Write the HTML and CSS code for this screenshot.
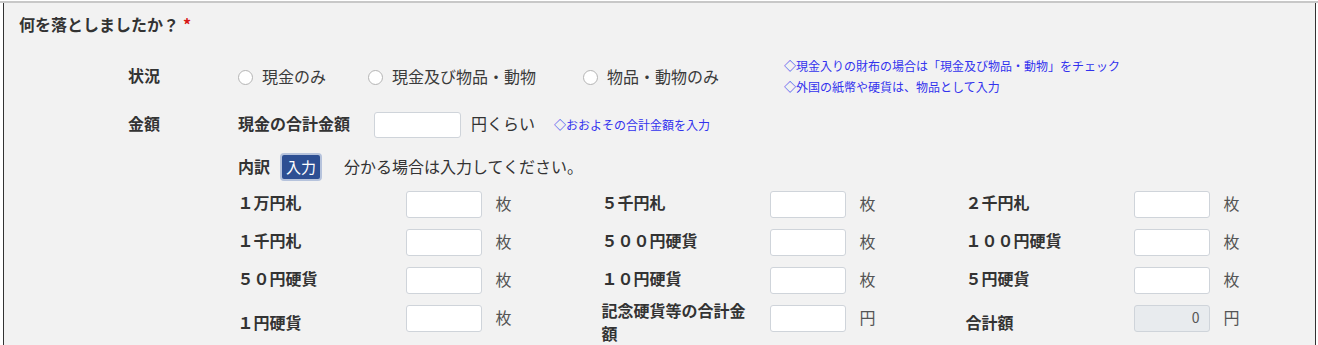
FILE: index.html
```html
<!DOCTYPE html>
<html lang="ja">
<head>
<meta charset="utf-8">
<link rel="stylesheet" href="styles.css">
</head>
<body>
<div class="topline"></div>
<div class="panel">
  <div class="title">何を落としましたか？<span class="req">*</span></div>
  <div class="fields">
    <div class="row row-status">
      <div class="row-label">状況</div>
      <div class="row-body">
        <label class="radio r1"><span class="dot"></span>現金のみ</label>
        <label class="radio r2"><span class="dot"></span>現金及び物品・動物</label>
        <label class="radio r3"><span class="dot"></span>物品・動物のみ</label>
        <div class="note note-two">◇現金入りの財布の場合は「現金及び物品・動物」をチェック<br>◇外国の紙幣や硬貨は、物品として入力</div>
      </div>
    </div>
    <div class="row row-amount">
      <div class="row-label">金額</div>
      <div class="row-body">
        <span class="sublabel">現金の合計金額</span>
        <span class="input amount-input"></span>
        <span class="unit-text">円くらい</span>
        <span class="note note-one">◇おおよその合計金額を入力</span>
      </div>
    </div>
    <div class="row row-detail">
      <div class="row-label"></div>
      <div class="row-body">
        <span class="sublabel">内訳</span>
        <span class="btn">入力</span>
        <span class="hint">分かる場合は入力してください。</span>
      </div>
    </div>
    <div class="row">
      <div class="row-label"></div>
      <div class="grid">
        <div class="g-label">１万円札</div><span class="input"></span><span class="g-unit">枚</span>
        <div class="g-label">５千円札</div><span class="input"></span><span class="g-unit">枚</span>
        <div class="g-label">２千円札</div><span class="input"></span><span class="g-unit">枚</span>

        <div class="g-label">１千円札</div><span class="input"></span><span class="g-unit">枚</span>
        <div class="g-label">５００円硬貨</div><span class="input"></span><span class="g-unit">枚</span>
        <div class="g-label">１００円硬貨</div><span class="input"></span><span class="g-unit">枚</span>

        <div class="g-label">５０円硬貨</div><span class="input"></span><span class="g-unit">枚</span>
        <div class="g-label">１０円硬貨</div><span class="input"></span><span class="g-unit">枚</span>
        <div class="g-label">５円硬貨</div><span class="input"></span><span class="g-unit">枚</span>

        <div class="g-label">１円硬貨</div><span class="input"></span><span class="g-unit">枚</span>
        <div class="g-label">記念硬貨等の合計金額</div><span class="input"></span><span class="g-unit">円</span>
        <div class="g-label">合計額</div><span class="input disabled">0</span><span class="g-unit">円</span>
      </div>
    </div>
  </div>
</div>
</body>
</html>
```
FILE: styles.css
```css
html, body {
  margin: 0;
  padding: 0;
  background: #ffffff;
}
body {
  font-family: "Noto Sans CJK JP", "Noto Sans", sans-serif;
  color: #333333;
  font-size: 16px;
  height: 345px;
  overflow: hidden;
}
.topline {
  height: 2px;
  margin-top: 1px;
  background: #c8c8c8;
}
.panel {
  margin-left: 3px;
  width: 1313px;
  height: 400px;
  border-left: 1px solid #333333;
  border-right: 1px solid #333333;
  background: #f2f2f2;
  padding: 10px 0 0 15px;
  box-sizing: border-box;
}
.title {
  font-weight: bold;
  font-size: 16px;
  line-height: 22px;
  height: 22px;
}
.req {
  color: #d81818;
  margin-left: 4px;
}
.fields {
  margin-left: 109px;
}
.row {
  display: flex;
  align-items: center;
}
.row-label {
  width: 110px;
  flex: none;
  font-weight: bold;
  font-size: 16px;
  padding-bottom: 3px;
}
.row-body {
  display: flex;
  align-items: center;
}
.row-status {
  margin-top: 21px;
}
.radio {
  display: flex;
  align-items: center;
  font-size: 16px;
  color: #3a3a3a;
  padding-bottom: 2px;
}
.r1 { margin-right: 42px; }
.r2 { margin-right: 47px; }
.r3 { margin-right: 65px; }
.dot {
  width: 15px;
  height: 15px;
  border-radius: 50%;
  border: 1px solid #b4b4b4;
  background: #ffffff;
  box-sizing: border-box;
  margin-right: 9px;
  margin-top: 3px;
}
.note {
  color: #3232ee;
  font-size: 12px;
}
.note-two {
  line-height: 20.7px;
}
.row-amount {
  margin-top: 14px;
}
.sublabel {
  font-weight: bold;
  font-size: 16px;
  padding-bottom: 3px;
}
.input {
  display: inline-block;
  width: 76px;
  height: 27px;
  box-sizing: border-box;
  background: #ffffff;
  border: 1px solid #cfd4da;
  border-radius: 3px;
}
.amount-input {
  width: 87px;
  height: 26px;
  margin-left: 24px;
}
.unit-text {
  margin-left: 10px;
  font-size: 16px;
  padding-bottom: 3px;
}
.note-one {
  margin-left: 19px;
}
.row-detail {
  margin-top: 15px;
}
.btn {
  display: inline-block;
  margin-left: 10px;
  width: 42px;
  height: 28px;
  box-sizing: border-box;
  line-height: 23px;
  text-align: center;
  color: #ffffff;
  font-size: 15px;
  background: #2d4f93;
  border: 2px solid #b6c3dc;
  border-radius: 4px;
}
.hint {
  margin-left: 22px;
  font-size: 16px;
  padding-bottom: 3px;
}
.grid {
  margin-top: 4px;
  margin-left: -0.5px;
  display: grid;
  grid-template-columns: repeat(2, 168px 76px 120px) 168px 76px 60px;
  grid-auto-rows: minmax(38px, auto);
}
.g-label {
  align-self: center;
  font-weight: bold;
  font-size: 16px;
  line-height: 22.4px;
  padding-right: 16px;
  padding-bottom: 4px;
}
.grid .input {
  align-self: start;
  margin-top: 5.5px;
}
.g-unit {
  align-self: start;
  margin-top: 5.5px;
  line-height: 24px;
  padding-left: 14px;
  color: #555555;
  font-size: 16px;
}
.input.disabled {
  background: #e8ebee;
  text-align: right;
  padding-right: 9px;
  font-size: 14px;
  line-height: 23px;
  color: #555555;
}
```
